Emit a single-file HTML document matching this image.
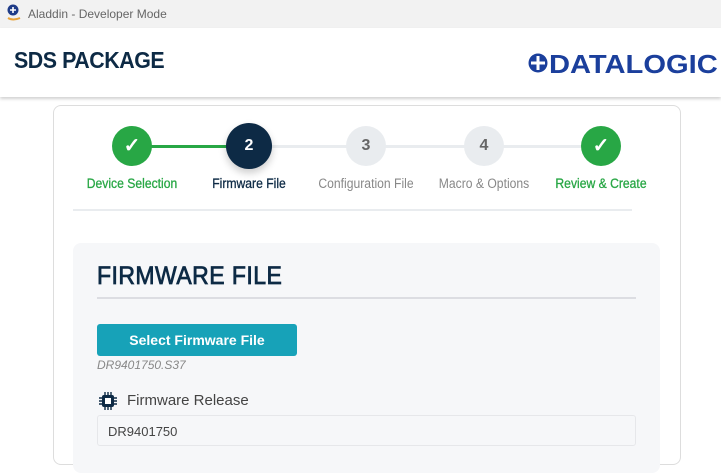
<!DOCTYPE html>
<html><head><style>
*{margin:0;padding:0;box-sizing:border-box}
body{width:721px;height:456px;overflow:hidden;background:#fff;font-family:"Liberation Sans",sans-serif;position:relative}
.tb{position:absolute;left:0;top:0;width:721px;height:28px;background:#f2f2f2;color:#666;font-size:12px}
.tb span{position:absolute;left:28px;top:7px}
.hd{position:absolute;left:0;top:28px;width:721px;height:69px;background:#fff;box-shadow:0 2px 3px rgba(0,0,0,.18)}
.hd h1{position:absolute;left:14px;top:19px;font-size:23px;font-weight:bold;color:#0d2a45;letter-spacing:-0.5px;transform:scaleX(.93);transform-origin:left}
.logo{position:absolute;left:549px;top:21px;font-size:26px;font-weight:bold;color:#1b3f9c;transform:scaleX(1.12);transform-origin:left;white-space:nowrap}
.card{position:absolute;left:53px;top:105px;width:628px;height:360px;border:1px solid #ddd;border-radius:8px;background:#fff}
.line{position:absolute;top:145px;height:4px}
.c{position:absolute;width:40px;height:40px;border-radius:50%;text-align:center;line-height:40px;font-weight:bold;font-size:16px}
.lb{position:absolute;top:176px;font-size:13.5px;width:140px;text-align:center;transform:scaleX(.9);-webkit-text-stroke:0.3px}
.panel{position:absolute;left:73px;top:243px;width:587px;height:230px;background:#f6f7f9;border-radius:8px}
</style></head><body>
<div class="tb"><svg style="position:absolute;left:6px;top:4px" width="16" height="18"><circle cx="7" cy="6" r="5.5" fill="#1f3c88"/><path d="M7 3v6M4 6h6" stroke="#fff" stroke-width="1.6"/><path d="M2 14q5 3 12 0" stroke="#e8a33a" stroke-width="2" fill="none"/></svg><span>Aladdin - Developer Mode</span></div>
<div class="hd"><h1>SDS PACKAGE</h1>
<svg width="20" height="20" style="position:absolute;left:528px;top:25px"><circle cx="10" cy="10" r="9.5" fill="#1b3f9c"/><path d="M10 3v14M3 10h14" stroke="#fff" stroke-width="3"/></svg>
<div class="logo">DATALOGIC</div></div>
<div class="card"></div>
<div class="line" style="left:132px;width:117px;background:#28a745;height:3px;top:145px"></div>
<div class="line" style="left:249px;width:352px;background:#e9ecef;height:3px;top:145px"></div>
<div class="c" style="left:112px;top:126px;background:#28a745;color:#fff;font-size:20px">✓</div>
<div class="c" style="left:226px;top:123px;width:46px;height:46px;line-height:46px;background:#0d2a45;color:#fff;box-shadow:0 4px 8px rgba(0,0,0,.2)">2</div>
<div class="c" style="left:346px;top:126px;background:#e9ecef;color:#666">3</div>
<div class="c" style="left:464px;top:126px;background:#e9ecef;color:#666">4</div>
<div class="c" style="left:581px;top:126px;background:#28a745;color:#fff;font-size:20px">✓</div>
<div class="lb" style="left:62px;color:#28a745">Device Selection</div>
<div class="lb" style="left:179px;color:#0d2a45">Firmware File</div>
<div class="lb" style="left:296px;color:#888;-webkit-text-stroke:0">Configuration File</div>
<div class="lb" style="left:414px;color:#888;-webkit-text-stroke:0">Macro &amp; Options</div>
<div class="lb" style="left:531px;color:#28a745">Review &amp; Create</div>
<div style="position:absolute;left:73px;top:209px;width:559px;height:2px;background:#e9ecef"></div>
<div class="panel"></div>
<div style="position:absolute;left:97px;top:262px;font-size:25px;color:#0d2a45;letter-spacing:0.5px;transform:scaleX(.92);transform-origin:left;-webkit-text-stroke:0.8px #0d2a45">FIRMWARE FILE</div>
<div style="position:absolute;left:97px;top:297px;width:539px;height:2px;background:#dcdde2"></div>
<div style="position:absolute;left:97px;top:324px;width:200px;height:32px;background:#17a2b8;border-radius:3px;color:#fff;font-size:14px;font-weight:bold;text-align:center;line-height:32px">Select Firmware File</div>
<div style="position:absolute;left:97px;top:358px;font-size:12px;font-style:italic;color:#888">DR9401750.S37</div>
<svg style="position:absolute;left:98px;top:391px" width="20" height="20"><rect x="4" y="4" width="12" height="12" rx="2" fill="#0d2a45"/><rect x="7" y="7" width="6" height="6" fill="#fff"/><path d="M7 1v3M10 1v3M13 1v3M7 16v3M10 16v3M13 16v3M1 7h3M1 10h3M1 13h3M16 7h3M16 10h3M16 13h3" stroke="#0d2a45" stroke-width="1.4"/></svg>
<div style="position:absolute;left:127px;top:392px;font-size:15px;color:#444">Firmware Release</div>
<div style="position:absolute;left:97px;top:415px;width:539px;height:31px;border:1px solid #e6e7ea;border-radius:3px;background:#f6f7f9;font-size:13px;color:#444;padding:8px 0 0 10px">DR9401750</div>
</body></html>
